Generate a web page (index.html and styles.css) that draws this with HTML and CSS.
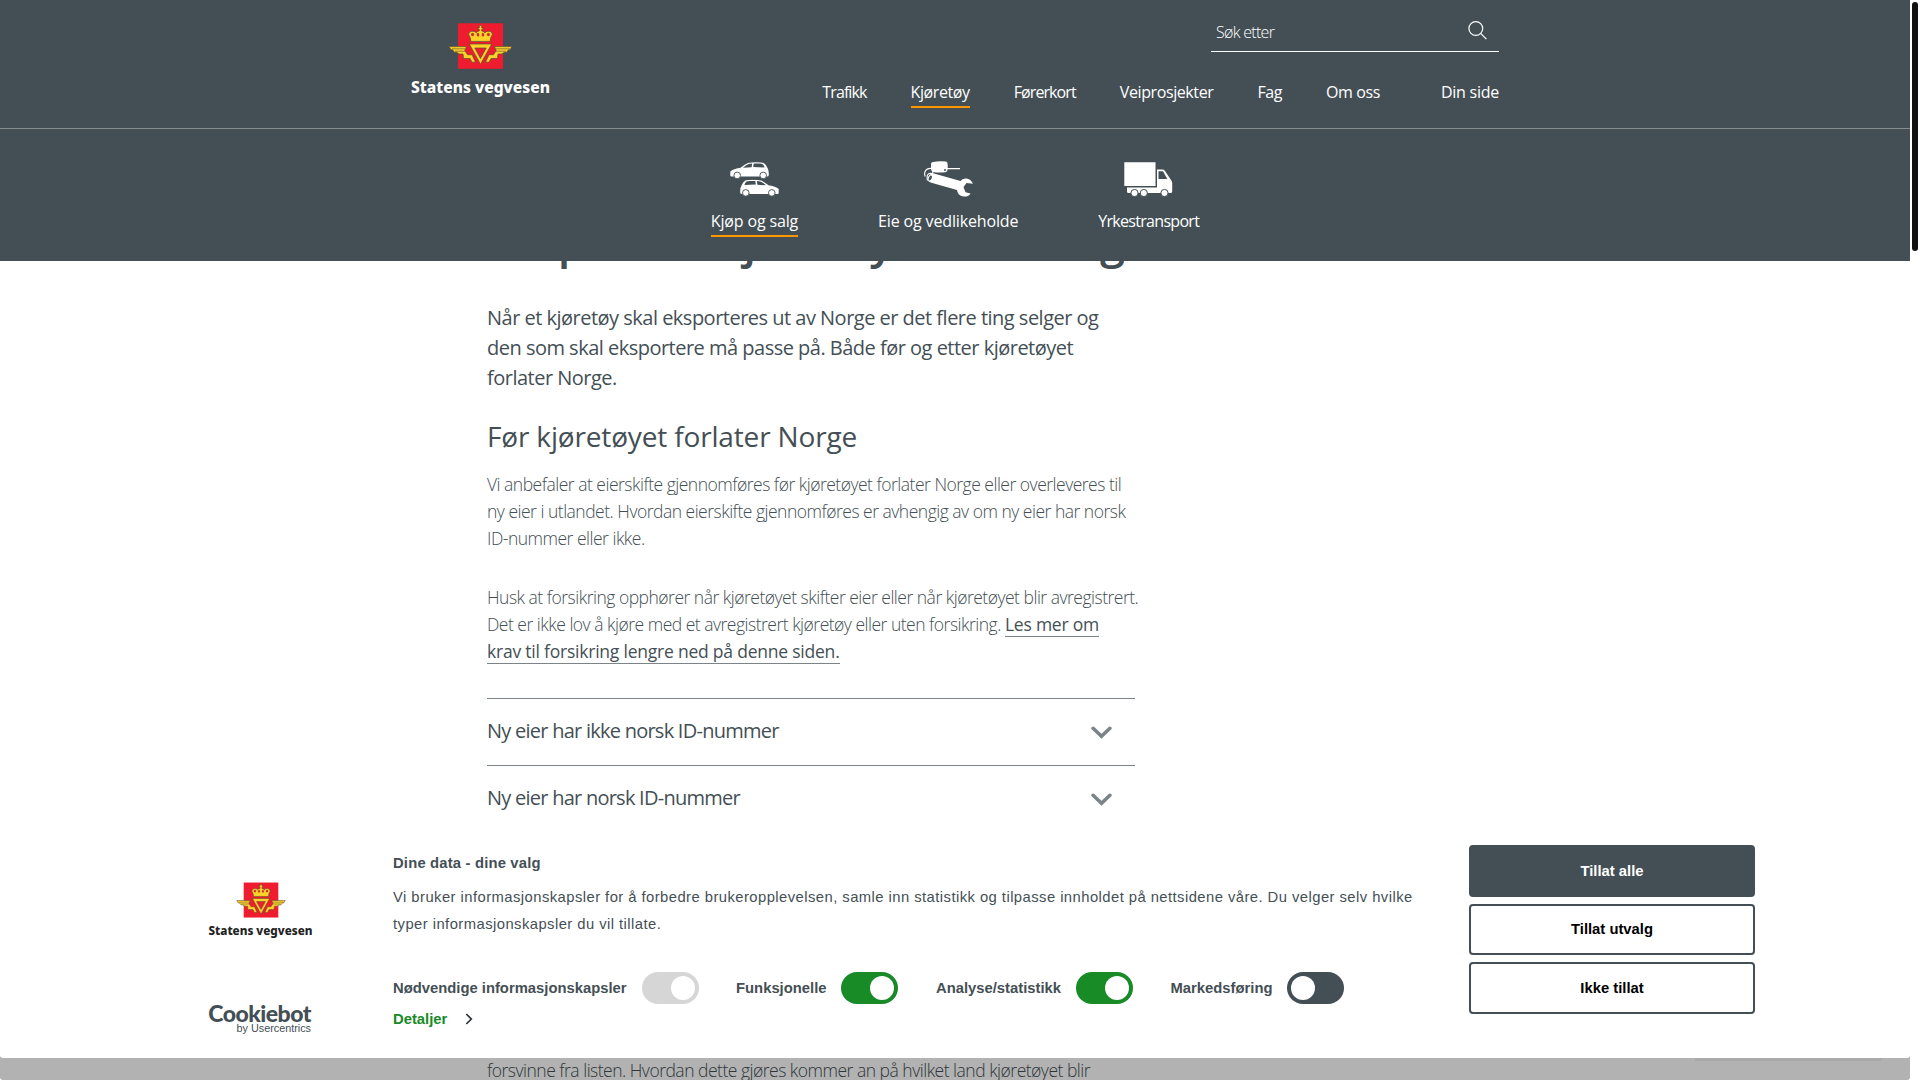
FILE: index.html
```html
<!DOCTYPE html>
<html lang="no">
<head>
  <meta charset="utf-8">
  <title>Eksport av kjøretøy ut av Norge</title>
  <link rel="stylesheet" href="styles.css">
</head>
<body>

<svg class="defs" width="0" height="0">
  <symbol id="emblem" viewBox="-10 0 65 46">
    <rect x="0" y="0.3" width="45" height="45.5" fill="#ee1c2e"/>
    <g fill="#fdd32a" stroke="#5a4a35" stroke-width="0.7">
      <!-- wings -->
      <path d="M-9 23.6H8.5L6.8 27.6L9.5 31.7H14L17.5 39.2H14L12 35.5H5.5L5 31H1.5L-1.5 29.3H-3.5L-5.5 26.8H-7Z"/>
      <path d="M54 23.6H36.5L38.2 27.6L35.5 31.7H31L27.5 39.2H31L33 35.5H39.5L40 31H43.5L46.5 29.3H48.5L50.5 26.8H52Z"/>
      <!-- crown -->
      <path d="M12.8 18.4L12.3 14.8L10.6 11.5Q10.8 8.4 14 8.2Q17 8 18.2 9.8Q19.5 8 21.3 8V6.3H19.9V4.9H21.3V2.6H23.7V4.9H25.1V6.3H23.7V8Q25.5 8 26.8 9.8Q28 8 31 8.2Q34.2 8.4 34.4 11.5L32.7 14.8L32.2 18.4Z"/>
      <path fill-rule="evenodd" d="M11.3 21H33.7L22.5 41.2ZM16.8 25L22.5 35.5L28.2 25Z"/>
    </g>
    <path d="M-6 25.8H7M-3 28.2H7M52 25.8H38M48 28.2H38" stroke="#5a4a35" stroke-width="0.6"/>
    <g fill="#ee1c2e" stroke="#5a4a35" stroke-width="0.3">
      <ellipse cx="14.6" cy="11.5" rx="1.4" ry="1.5"/>
      <ellipse cx="20" cy="11.7" rx="1.1" ry="1.7"/>
      <ellipse cx="25" cy="11.7" rx="1.1" ry="1.7"/>
      <ellipse cx="30.4" cy="11.5" rx="1.4" ry="1.5"/>
    </g>
  </symbol>
  <symbol id="car" viewBox="0 0 39 17">
    <path fill="#fff" d="M.3 13.5V9.5Q2 7.5 10.5 5.8Q15 2 18 1Q21 .3 26 .3Q32 .3 34 1.2Q36 2.5 37.5 6Q39 8 38.8 13Q38.7 14.6 37 14.6H1.5Q.3 14.6 .3 13.5Z"/>
    <path fill="#444f55" d="M13 5.8Q16.5 2.6 18.8 1.9Q20 1.5 22.2 1.5L21.6 5.2ZM23.2 5.1L23.7 1.5H29Q32.3 1.6 33 2.4Q34 3.5 34.6 5.4Z"/>
    <g fill="#fff" stroke="#444f55" stroke-width="0.9">
      <circle cx="7.2" cy="13.4" r="3.3"/>
      <circle cx="33.2" cy="13.4" r="3.3"/>
    </g>
  </symbol>
  <symbol id="chevron" viewBox="0 0 20 12">
    <path d="M2 2L10 9.6L18 2" fill="none" stroke="#7b8488" stroke-width="3.4" stroke-linecap="round"/>
  </symbol>
</svg>

<div class="page">

  <header class="header">
    <div class="header-top">
      <div class="logo">
        <svg width="65" height="46"><use href="#emblem"/></svg>
        <span>Statens vegvesen</span>
      </div>
      <div class="header-right">
        <div class="search">
          <span>Søk etter</span>
          <svg width="19" height="19" viewBox="0 0 19 19" fill="none" stroke="#fff" stroke-width="1.2">
            <circle cx="7.8" cy="7.5" r="6.9"/>
            <path d="M12.6 12.4L18.4 18.2"/>
          </svg>
        </div>
        <nav class="nav">
          <a class="tight">Trafikk</a>
          <a class="active">Kjøretøy</a>
          <a class="tight">Førerkort</a>
          <a>Veiprosjekter</a>
          <a>Fag</a>
          <a>Om oss</a>
          <a class="my-page">Din side</a>
        </nav>
      </div>
    </div>
    <div class="subnav">
      <a class="active">
        <svg width="49" height="36" viewBox="0 0 49 36">
          <use href="#car" x="0" y="1" width="39" height="17"/>
          <use href="#car" x="0" y="0" width="39" height="17" transform="translate(49 18.5) scale(-1 1)"/>
        </svg>
        <span>Kjøp og salg</span>
      </a>
      <a>
        <svg width="49" height="36" viewBox="0 0 49 36">
          <path fill="#fff" d="M8 1.2Q15 -.2 22 .5Q23.7 1.2 23.7 3.5V7H36V8.3H23.5Q23.5 11 21 11.2Q15 12 9 11Q7.3 10.5 7 8V3.5Q7 1.7 8 1.2Z"/>
          <path fill="#fff" d="M10 12.6L36.5 20Q38 17.7 41.5 17.5Q46.5 17.6 49 22.8L42.5 22L39.5 26L41.5 31.2L46.5 32.4Q44.5 36 39.5 35.5Q33.5 34.5 33 29L6.5 21.5Q2.6 20 4 16Q5.8 12.5 10 12.6Z"/>
          <circle cx="21" cy="9" r="1" fill="#444f55"/>
          <ellipse cx="6.3" cy="17" rx="1.4" ry="2.6" fill="#444f55" transform="rotate(25 6.3 17)"/>
          <path d="M8 7.5C2 6.5 -.5 11 1.2 15.5M3.5 19.5C2 13 5 11.5 8.8 12.8V10" fill="none" stroke="#fff" stroke-width="1.1"/>
        </svg>
        <span>Eie og vedlikeholde</span>
      </a>
      <a>
        <svg width="49" height="36" viewBox="0 0 49 36">
          <path fill="#fff" d="M.3 1.3H31.5V25H.3ZM3 26.5H33V8.5H39Q40 8.5 41 10L47 19Q48.2 20.5 48.2 22V30.5Q48.2 32 46.5 32H4.5Q3 32 3 30.5Z"/>
          <path fill="#444f55" d="M34.5 10.3H39L43.3 18H34.5Z"/>
          <g fill="#fff" stroke="#444f55">
            <circle cx="10.5" cy="32" r="3.6"/>
            <circle cx="19.8" cy="32" r="3.6"/>
            <circle cx="40.5" cy="32" r="3.6"/>
          </g>
        </svg>
        <span class="tight">Yrkestransport</span>
      </a>
    </div>
  </header>

  <main class="content">
    <h1>Eksport av kjøretøy ut av Norge</h1>
    <p class="lead">Når et kjøretøy skal eksporteres ut av Norge er det flere ting selger og<br>den som skal eksportere må passe på. Både før og etter kjøretøyet<br>forlater Norge.</p>
    <h2>Før kjøretøyet forlater Norge</h2>
    <p>Vi anbefaler at eierskifte gjennomføres før kjøretøyet forlater Norge eller overleveres til<br>ny eier i utlandet. Hvordan eierskifte gjennomføres er avhengig av om ny eier har norsk<br>ID-nummer eller ikke.</p>
    <p>Husk at forsikring opphører når kjøretøyet skifter eier eller når kjøretøyet blir avregistrert.<br>Det er ikke lov å kjøre med et avregistrert kjøretøy eller uten forsikring. <a>Les mer om<br>krav til forsikring lengre ned på denne siden.</a></p>
    <div class="accordion">
      <div class="accordion-item">
        <span>Ny eier har ikke norsk ID-nummer</span>
        <svg width="21" height="13"><use href="#chevron"/></svg>
      </div>
      <div class="accordion-item">
        <span>Ny eier har norsk ID-nummer</span>
        <svg width="21" height="13"><use href="#chevron"/></svg>
      </div>
    </div>
    <p class="last">forsvinne fra listen. Hvordan dette gjøres kommer an på hvilket land kjøretøyet blir</p>
  </main>

  <div class="chat-box"></div>

  <div class="cookie">
    <div class="cookie-logos">
      <div class="logo small">
        <svg width="50" height="36"><use href="#emblem"/></svg>
        <span>Statens vegvesen</span>
      </div>
      <div class="cookiebot">
        <b>Cookiebot</b>
        <span>by Usercentrics</span>
      </div>
    </div>
    <div class="cookie-text">
      <h3>Dine data - dine valg</h3>
      <p>Vi bruker informasjonskapsler for å forbedre brukeropplevelsen, samle inn statistikk og tilpasse innholdet på nettsidene våre. Du velger selv hvilke<br>typer informasjonskapsler du vil tillate.</p>
      <div class="switches">
        <label>Nødvendige informasjonskapsler <i class="switch on disabled"></i></label>
        <label>Funksjonelle <i class="switch on"></i></label>
        <label>Analyse/statistikk <i class="switch on"></i></label>
        <label>Markedsføring <i class="switch"></i></label>
      </div>
      <a class="details">Detaljer
        <svg width="8" height="12" viewBox="0 0 8 12"><path d="M1.3 1L6.3 6L1.3 11" fill="none" stroke="#2b3337" stroke-width="1.7"/></svg>
      </a>
    </div>
    <div class="cookie-buttons">
      <button class="primary">Tillat alle</button>
      <button>Tillat utvalg</button>
      <button>Ikke tillat</button>
    </div>
  </div>

</div>

<div class="scrollbar"></div>

</body>
</html>
```
FILE: styles.css
```css
:root {
  --dark: #444f55;
  --orange: #ff9600;
  --green: #188a26;
  --line: #7b8488;
}

* {
  box-sizing: border-box;
}

body {
  margin: 0;
  height: 1080px;
  overflow: hidden;
  background: #fff;
  color: var(--dark);
  font-family: 'Open Sans', 'Noto Sans', sans-serif;
}

.defs {
  position: absolute;
}

.page {
  position: relative;
  width: 1910px;
  height: 1080px;
  overflow: hidden;
}

/* Header */
.header {
  position: relative;
  z-index: 2;
  height: 261px;
  background: var(--dark);
  color: #fff;
}

.header-top {
  display: flex;
  justify-content: space-between;
  height: 128px;
  padding: 0 411px;
}

.logo {
  display: flex;
  flex-direction: column;
  align-items: center;
  width: 139px;
  padding-top: 23px;
  font-family: 'Noto Sans', sans-serif;
  font-size: 15.6px;
  font-weight: 800;
  line-height: 20px;
  white-space: nowrap;
}

.logo span {
  margin-top: 8px;
}

.search {
  display: flex;
  justify-content: space-between;
  width: 288px;
  height: 52px;
  margin-left: auto;
  padding: 21px 12px 0 5px;
  border-bottom: 1px solid #fff;
  font-size: 16px;
  font-weight: 300;
  line-height: 22px;
  letter-spacing: -0.7px;
}

.nav {
  display: flex;
  justify-content: flex-end;
  gap: 44px;
  margin-top: 29px;
  font-size: 16px;
  line-height: 22px;
  letter-spacing: -0.4px;
}

.nav a {
  height: 27px;
}

.nav .tight {
  letter-spacing: -0.9px;
}

.nav .my-page {
  margin-left: 17px;
  letter-spacing: -0.25px;
}

.nav .active,
.subnav .active span {
  border-bottom: 2px solid var(--orange);
}

.subnav {
  display: flex;
  justify-content: center;
  gap: 80px;
  height: 133px;
  padding-top: 32px;
  border-top: 1px solid #868b8e;
  font-size: 16px;
  line-height: 22px;
  letter-spacing: -0.15px;
}

.subnav a {
  display: flex;
  flex-direction: column;
  align-items: center;
}

.subnav svg {
  height: 36px;
}

.subnav span {
  height: 27px;
  margin-top: 13px;
}

.subnav .tight {
  letter-spacing: -0.7px;
}

/* Article */
.content {
  width: 648px;
  margin: -47px 0 0 487px;
}

h1 {
  margin: 0;
  font-size: 45px;
  font-weight: 600;
  line-height: 54px;
  letter-spacing: -0.7px;
  white-space: nowrap;
}

.lead {
  margin: 35px 0 25px;
  font-size: 20px;
  font-weight: 400;
  line-height: 30px;
  letter-spacing: -0.51px;
  white-space: nowrap;
}

h2 {
  margin: 0 0 17px;
  font-size: 28px;
  font-weight: 400;
  line-height: 36px;
  letter-spacing: -0.16px;
}

.content p:not(.lead) {
  margin: 0 0 32px;
  font-size: 17.5px;
  font-weight: 300;
  line-height: 27px;
  letter-spacing: -0.5px;
  white-space: nowrap;
}

.content p a {
  border-bottom: 1px solid var(--line);
  font-weight: 500;
  letter-spacing: -0.22px;
}

.accordion {
  margin-top: 33px;
}

.accordion-item {
  display: flex;
  align-items: center;
  justify-content: space-between;
  height: 67px;
  padding-right: 23px;
  border-top: 1px solid var(--line);
  font-size: 20px;
  letter-spacing: -0.75px;
}

.accordion-item span {
  padding-bottom: 4px;
}

.content .last {
  padding-top: 225px;
}

.chat-box {
  position: absolute;
  left: 1695px;
  top: 900px;
  width: 187px;
  height: 161px;
  background: #f2f2f2;
}

/* Cookie banner */
.cookie {
  position: absolute;
  left: 0;
  bottom: 22px;
  display: flex;
  width: 1910px;
  height: 225px;
  padding: 12px 155px 0 208px;
  border-radius: 3px;
  background: #fff;
  box-shadow: 0 22px 0 rgba(0, 0, 0, 0.3);
  font-family: 'Liberation Sans', Arial, sans-serif;
  font-size: 14.8px;
}

.cookie-logos {
  width: 105px;
  margin-right: 80px;
}

.logo.small {
  width: 105px;
  padding-top: 37px;
  color: #222;
  font-size: 11.7px;
}

.logo.small span {
  margin-top: 2px;
}

.cookiebot {
  display: flex;
  flex-direction: column;
  align-items: flex-end;
  width: 103px;
  margin-top: 61px;
}

.cookiebot b {
  font-family: Lato, sans-serif;
  font-size: 23px;
  font-weight: 900;
  line-height: 24px;
  letter-spacing: -0.5px;
}

.cookiebot span {
  margin-top: -3px;
  font-size: 10.8px;
  line-height: 12px;
}

.cookie-text {
  flex: 1;
}

.cookie-text h3 {
  margin: 7px 0 10px;
  font-size: 14.8px;
  line-height: 22px;
  letter-spacing: 0.18px;
}

.cookie-text p {
  margin: 0;
  line-height: 27px;
  letter-spacing: 0.445px;
  white-space: nowrap;
}

.switches {
  display: flex;
  gap: 37.5px;
  margin-top: 34px;
  font-weight: bold;
}

.switches label {
  display: flex;
  align-items: center;
  gap: 15px;
}

.switch {
  width: 57px;
  height: 32px;
  padding: 4px;
  border-radius: 16px;
  background: var(--dark);
}

.switch::after {
  content: '';
  display: block;
  width: 24px;
  height: 24px;
  border-radius: 50%;
  background: #fff;
}

.switch.on {
  background: var(--green);
}

.switch.on::after {
  margin-left: auto;
}

.switch.disabled {
  background: #d6d6d6;
}

.details {
  display: flex;
  align-items: center;
  gap: 18px;
  margin-top: 6px;
  color: var(--green);
  font-weight: bold;
  line-height: 18px;
}

.cookie-buttons {
  display: flex;
  flex-direction: column;
  gap: 7px;
  width: 286px;
}

button {
  height: 51.5px;
  border: 2px solid var(--dark);
  border-radius: 4px;
  background: #fff;
  color: #000;
  font: bold 14.8px 'Liberation Sans', Arial, sans-serif;
}

button.primary {
  background: var(--dark);
  color: #fff;
}

.scrollbar {
  position: absolute;
  left: 1912px;
  top: 2px;
  width: 6px;
  height: 249px;
  border-radius: 3px;
  background: #111;
}
```
